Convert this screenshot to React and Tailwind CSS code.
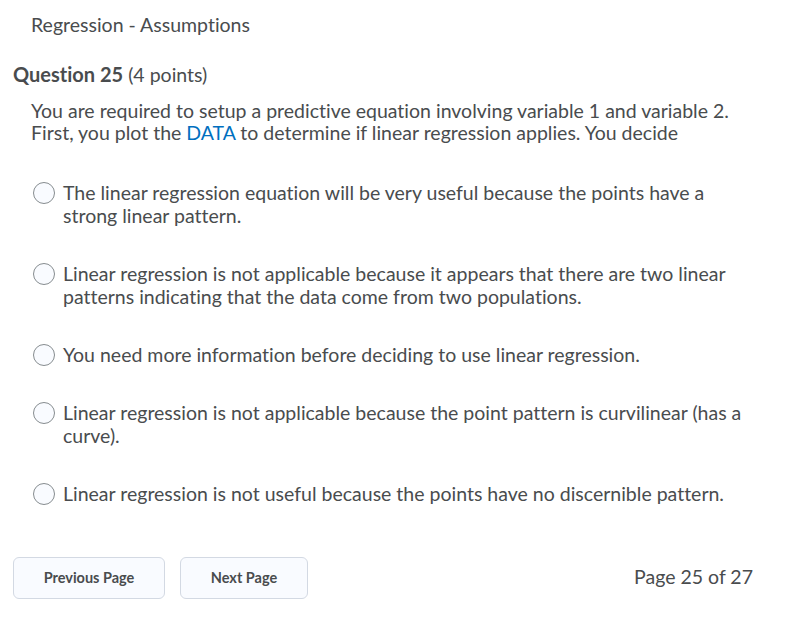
import React from 'react';

const options = [
    'The linear regression equation will be very useful because the points have a strong linear pattern.',
    'Linear regression is not applicable because it appears that there are two linear patterns indicating that the data come from two populations.',
    'You need more information before deciding to use linear regression.',
    'Linear regression is not applicable because the point pattern is curvilinear (has a curve).',
    'Linear regression is not useful because the points have no discernible pattern.',
];

const Radio = () => (
    <span className="mt-[1px] w-[22px] h-[22px] shrink-0 rounded-full border border-[#868c8f] bg-[#f9fbff]" />
);

const App = () => {
    return (
        <div className="min-h-screen bg-white text-[#494c4e] font-['Lato','Liberation_Sans',sans-serif] [font-variant-ligatures:none] pl-[13px] pr-[42px]">
            {/* Section title */}
            <div className="pl-[18px] pt-[13px] text-[19.5px] leading-[23px]">Regression - Assumptions</div>

            {/* Question header */}
            <div className="mt-[27px] text-[19.5px] leading-[23px]">
                <span className="font-bold text-[20px]">Question 25</span> (4 points)
            </div>

            {/* Prompt */}
            <p className="mt-[14px] pl-[18px] text-[19.5px] leading-[22px]">
                You are required to setup a predictive equation involving variable 1 and variable 2.
                First, you plot the <span className="text-[#006fbf]">DATA</span> to determine if linear regression applies. You decide
            </p>

            {/* Options */}
            <div className="mt-[37px] pl-[20px] flex flex-col gap-[35px]">
                {options.map((opt) => (
                    <label key={opt} className="flex items-start gap-[8px] text-[19.5px] leading-[23px]">
                        <Radio />
                        <span>{opt}</span>
                    </label>
                ))}
            </div>

            {/* Footer */}
            <div className="mt-[52px] flex items-center justify-between">
                <div className="flex gap-[15px]">
                    <button className="w-[152px] h-[42px] rounded-[6px] border border-[#d3d9e3] bg-[#f9fbff] text-[14.5px] font-bold text-[#494c4e]">
                        Previous Page
                    </button>
                    <button className="w-[128px] h-[42px] rounded-[6px] border border-[#d3d9e3] bg-[#f9fbff] text-[14.5px] font-bold text-[#494c4e]">
                        Next Page
                    </button>
                </div>
                <div className="pb-[4px] text-[19.5px] leading-[23px]">Page 25 of 27</div>
            </div>
        </div>
    );
};

export default App;
